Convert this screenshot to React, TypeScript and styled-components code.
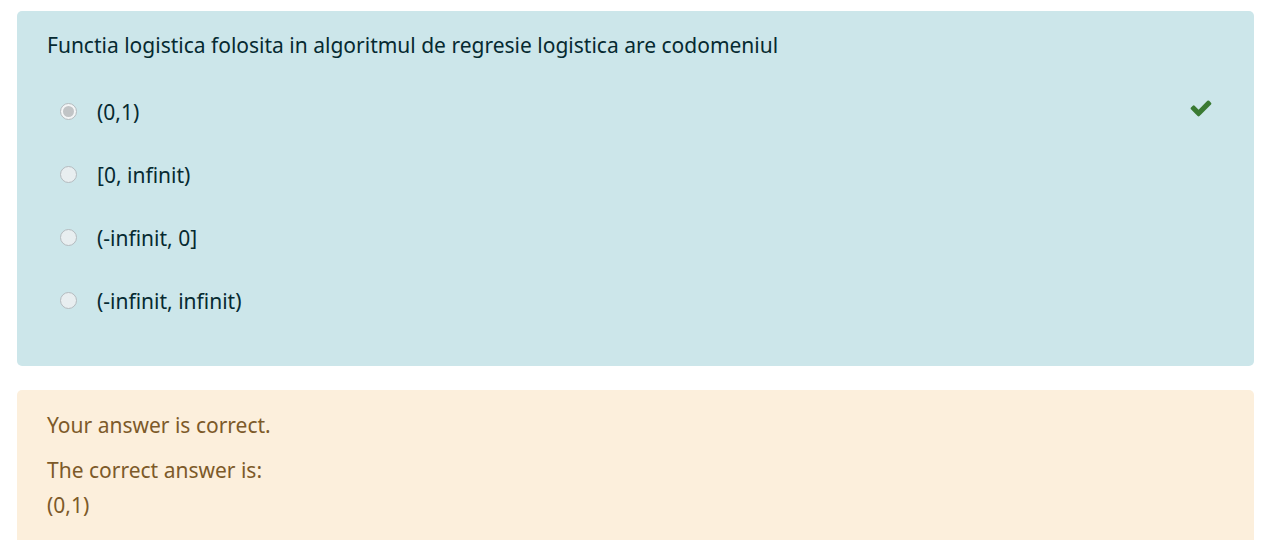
import React from "react";
import styled, { createGlobalStyle } from "styled-components";

const GlobalStyle = createGlobalStyle`
  html, body { margin: 0; padding: 0; background: #ffffff; }
  body { font-family: "Noto Sans", "Open Sans", sans-serif; font-size: 21px; }
`;

const Page = styled.div`
  display: flex;
  flex-direction: column;
  gap: 24px;
  padding: 11px 25px 0 17px;
`;

const Formulation = styled.div`
  background: #cce6ea;
  color: #062a31;
  border-radius: 5px;
  padding: 19px 30px 34px 30px;
`;

const QText = styled.div`
  line-height: 30px;
`;

const Answers = styled.div`
  display: flex;
  flex-direction: column;
  margin-top: 20px;
`;

const Row = styled.div`
  display: flex;
  align-items: center;
  height: 63px;
  padding-left: 13px;
`;

const Radio = styled.span<{ $checked?: boolean }>`
  box-sizing: border-box;
  width: 17px;
  height: 17px;
  border-radius: 50%;
  border: 1px solid #b4bbbf;
  background: ${(p) => (p.$checked ? "#f3f5f6" : "#e8eef0")};
  display: flex;
  align-items: center;
  justify-content: center;
  flex-shrink: 0;
  &::after {
    content: "";
    display: ${(p) => (p.$checked ? "block" : "none")};
    width: 11px;
    height: 11px;
    border-radius: 50%;
    background: #c1c4c6;
  }
`;

const Label = styled.span`
  margin-left: 20px;
  flex: 1;
  line-height: 30px;
`;

const Check = styled.svg`
  width: 24px;
  height: 24px;
  margin-right: 11px;
  margin-bottom: 8px;
  fill: #3a7a33;
`;

const Outcome = styled.div`
  background: #fcefdc;
  color: #7d5a29;
  border-radius: 5px;
  padding: 18px 30px 30px 30px;
`;

const OutLine = styled.div<{ $gap?: number }>`
  line-height: 35px;
  margin-top: ${(p) => p.$gap ?? 0}px;
`;

const answers = ["(0,1)", "[0, infinit)", "(-infinit, 0]", "(-infinit, infinit)"];

function CheckIcon() {
  return (
    <Check viewBox="0 0 1792 1792" aria-hidden="true">
      <path d="M1671 566q0 40-28 68l-724 724-136 136q-28 28-68 28t-68-28l-136-136-362-362q-28-28-28-68t28-68l136-136q28-28 68-28t68 28l294 295 656-657q28-28 68-28t68 28l136 136q28 28 28 68z" />
    </Check>
  );
}

export default function App() {
  return (
    <>
      <GlobalStyle />
      <Page>
        <Formulation>
          <QText>Functia logistica folosita in algoritmul de regresie logistica are codomeniul</QText>
          <Answers>
            {answers.map((a, i) => (
              <Row key={a}>
                <Radio $checked={i === 0} />
                <Label>{a}</Label>
                {i === 0 && <CheckIcon />}
              </Row>
            ))}
          </Answers>
        </Formulation>
        <Outcome>
          <OutLine>Your answer is correct.</OutLine>
          <OutLine $gap={10}>The correct answer is:</OutLine>
          <OutLine>(0,1)</OutLine>
        </Outcome>
      </Page>
    </>
  );
}
